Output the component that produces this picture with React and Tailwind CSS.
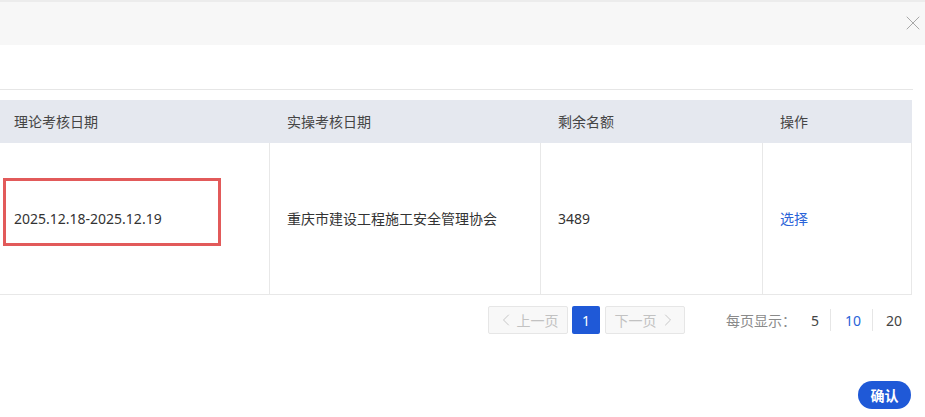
import { ChevronLeft, ChevronRight, X } from 'lucide-react';

const font = { fontFamily: '"Noto Sans", "Noto Sans CJK SC", sans-serif' };

const columns = [
  { label: '理论考核日期', width: 'w-[270px]', pad: 'pl-[14px]' },
  { label: '实操考核日期', width: 'w-[271px]', pad: 'pl-[17px]' },
  { label: '剩余名额', width: 'w-[222px]', pad: 'pl-[17px]' },
  { label: '操作', width: 'w-[149px]', pad: 'pl-[17px]' },
];

const PageButton = ({ children, className = '' }) => (
  <button
    className={`h-[28px] flex items-center justify-center rounded-[2px] text-[14px] ${className}`}
  >
    {children}
  </button>
);

const App = () => {
  return (
    <div className="w-[925px] h-[417px] bg-white overflow-hidden text-[#333]" style={font}>
      {/* dialog header */}
      <div className="h-[45px] bg-[#f7f7f7] border-t-[2px] border-[#ececec] flex items-center justify-end pb-[2px]">
        <X className="h-[24px] w-[24px] text-[#a8a8a8]" strokeWidth={1} />
      </div>

      <div className="h-[44px]" />
      <div className="w-[913px] border-t border-[#e6e6e6]" />

      {/* table */}
      <div className="mt-[10px] w-[912px]">
        <div className="flex h-[43px] bg-[#e5e8ef] items-center text-[14px] text-[#444]">
          {columns.map((col) => (
            <div key={col.label} className={`${col.width} ${col.pad}`}>
              {col.label}
            </div>
          ))}
        </div>
        <div className="flex h-[152px] border-b border-[#e8e8e8] text-[14px] text-[#333]">
          <div className="relative w-[270px] border-r border-[#e8e8e8] flex items-center pl-[14px]">
            2025.12.18-2025.12.19
            <div className="absolute left-[3px] top-[35px] w-[218px] h-[68px] border-[3px] border-[#e25a5a]" />
          </div>
          <div className="w-[271px] border-r border-[#e8e8e8] flex items-center pl-[17px]">
            重庆市建设工程施工安全管理协会
          </div>
          <div className="w-[222px] border-r border-[#e8e8e8] flex items-center pl-[17px]">
            3489
          </div>
          <div className="w-[149px] border-r border-[#e8e8e8] flex items-center pl-[17px] text-[#2a63d8]">
            选择
          </div>
        </div>
      </div>

      {/* pagination */}
      <div className="mt-[11px] flex items-center pl-[488px]">
        <PageButton className="w-[80px] border border-[#e6e6e6] bg-[#f8f8f8] text-[#c2c2c2] gap-[1px]">
          <ChevronLeft className="h-[20px] w-[20px] -ml-[2px]" strokeWidth={1.1} />
          上一页
        </PageButton>
        <PageButton className="ml-[4px] w-[28px] bg-[#1f59d7] text-white">1</PageButton>
        <PageButton className="ml-[5px] w-[80px] border border-[#e6e6e6] bg-[#f8f8f8] text-[#c2c2c2] gap-[1px]">
          下一页
          <ChevronRight className="h-[20px] w-[20px] -mr-[2px]" strokeWidth={1.1} />
        </PageButton>
        <span className="ml-[41px] text-[14px] text-[#8a8a8a]">每页显示：</span>
        <div className="ml-[15px] flex items-center text-[14px]">
          <span className="pr-[11px] text-[#444]">5</span>
          <span className="h-[22px] border-l border-[#e6e6e6]" />
          <span className="pl-[14px] pr-[11px] text-[#2a63d8]">10</span>
          <span className="h-[22px] border-l border-[#e6e6e6]" />
          <span className="pl-[13px] text-[#444]">20</span>
        </div>
      </div>

      {/* footer */}
      <div className="mt-[47px] flex justify-end pr-[14px]">
        <button className="h-[28px] w-[53px] rounded-full bg-[#1f59d7] text-white text-[14px] font-bold">
          确认
        </button>
      </div>
    </div>
  );
};

export default App;
